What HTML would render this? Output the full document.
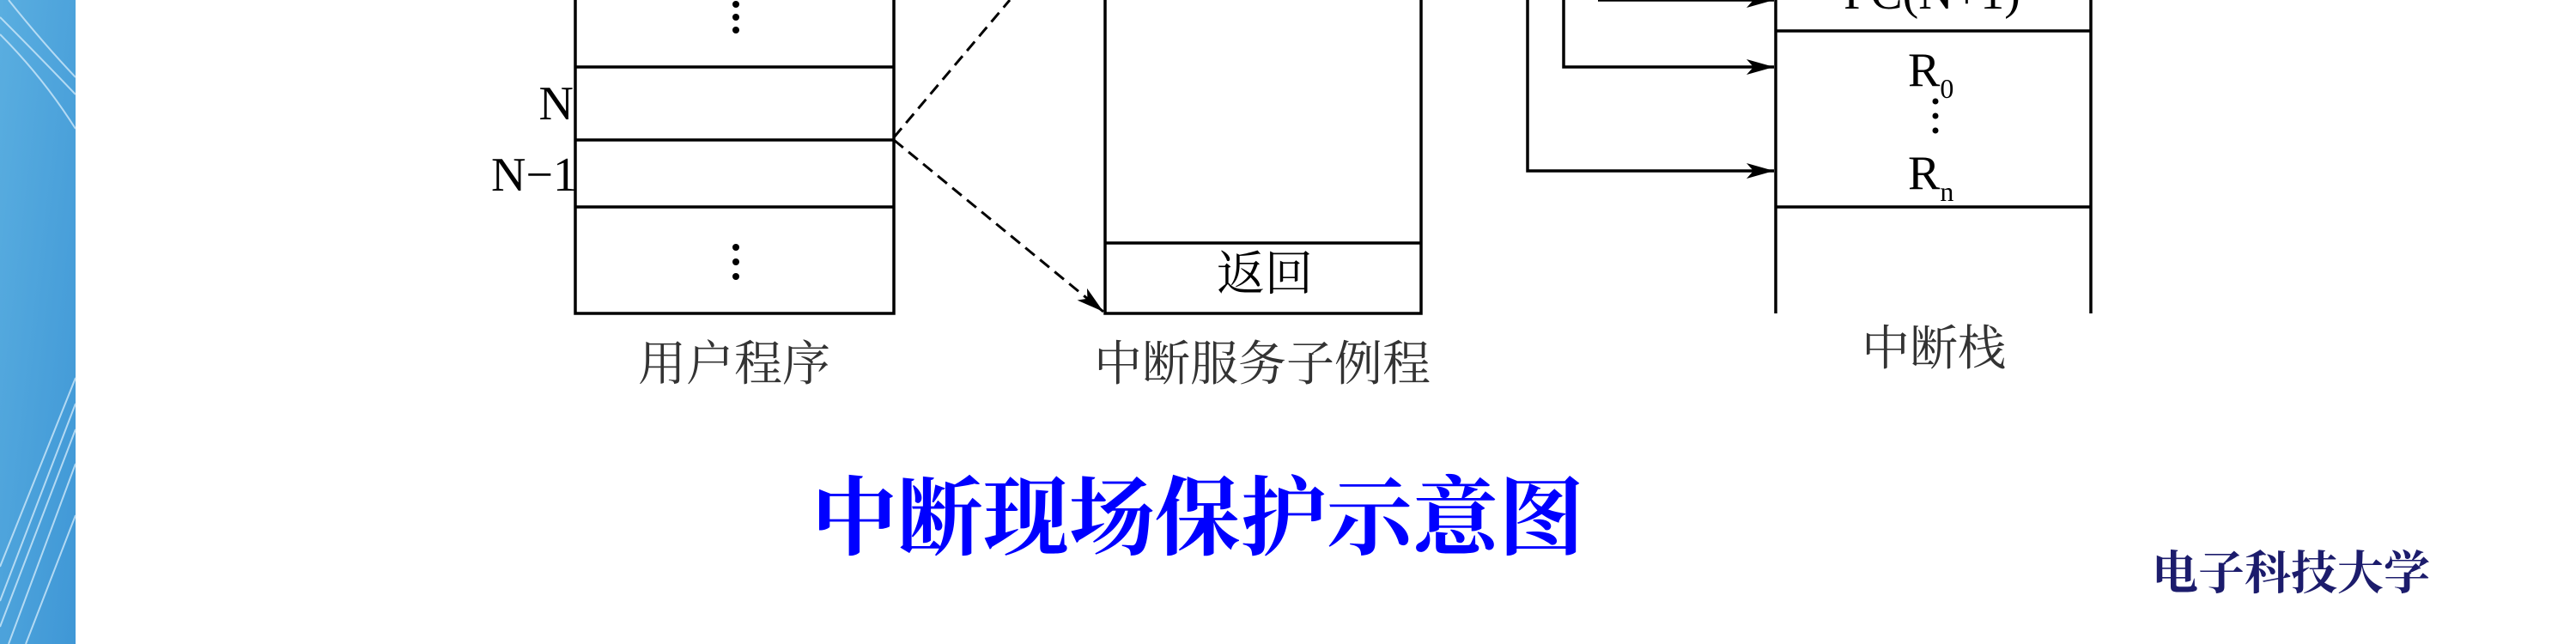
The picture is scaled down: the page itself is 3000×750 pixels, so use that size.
<!DOCTYPE html>
<html><head><meta charset="utf-8"><style>
html,body{margin:0;padding:0;background:#fff;}
body{width:3000px;height:750px;overflow:hidden;position:relative;}
</style></head><body>
<svg width="3000" height="750" viewBox="0 0 3000 750" xmlns="http://www.w3.org/2000/svg" style="position:absolute;left:0;top:0">
<defs>
<linearGradient id="bg" x1="0" y1="0" x2="1" y2="1">
<stop offset="0" stop-color="#5aaee0"/><stop offset="1" stop-color="#3f97d6"/>
</linearGradient>
<marker id="ah" markerWidth="32" markerHeight="18" refX="32" refY="9" orient="auto" markerUnits="userSpaceOnUse" viewBox="0 0 32 18"><path d="M0 0L32 9L0 18L8 9Z" fill="#000"/></marker>
</defs>
<rect x="0" y="0" width="88" height="750" fill="url(#bg)"/>
<g stroke="#cfe9fa" stroke-width="2" fill="none" opacity="0.8">
<path d="M0 20 Q40 60 88 110"/><path d="M0 40 Q50 90 88 150"/><path d="M10 0 Q50 50 88 90"/>
<path d="M0 700 L88 470"/><path d="M0 730 L88 500"/><path d="M10 750 L88 540"/><path d="M30 750 L88 600"/><path d="M0 660 L88 440"/>
</g>
<g stroke="#000" stroke-width="3.5" fill="none">
<path d="M670 0V365H1041V0"/><path d="M670 78H1041M670 163H1041M670 241H1041"/>
<path d="M1287 0V365H1655V0"/><path d="M1287 283H1655"/>
<path d="M2068 0V365M2435 0V365"/><path d="M2068 36H2435M2068 241H2435"/>
<path d="M1861 0H2066" marker-end="url(#ah)"/>
<path d="M1821 0V78H2066" marker-end="url(#ah)"/>
<path d="M1779 0V199H2066" marker-end="url(#ah)"/>
</g>
<g stroke="#000" stroke-width="3" fill="none" stroke-dasharray="14 8">
<path d="M1041 160L1176 0"/>
<path d="M1041 163L1285 363" marker-end="url(#ah)"/>
</g>
<g fill="#000">
<circle cx="857" cy="5" r="4"/><circle cx="857" cy="20" r="4"/><circle cx="857" cy="35" r="4"/>
<circle cx="857" cy="288" r="4"/><circle cx="857" cy="305" r="4"/><circle cx="857" cy="322" r="4"/>
<circle cx="2254" cy="118" r="3.5"/><circle cx="2254" cy="135" r="3.5"/><circle cx="2254" cy="152" r="3.5"/>
</g>
<g font-family="Liberation Serif, serif" fill="#000" font-size="56">
<text x="668" y="139" text-anchor="end">N</text>
<text x="672" y="222" text-anchor="end">N−1</text>
<text x="2222" y="100" font-size="56">R<tspan font-size="32" dy="14">0</tspan></text>
<text x="2222" y="220" font-size="56">R<tspan font-size="32" dy="14">n</tspan></text>
<text x="2250" y="10" font-size="56" text-anchor="middle">PC(N+1)</text>
</g>
<g font-family="Liberation Serif, 'Noto Serif CJK SC', serif" fill="#333" font-size="56" text-anchor="middle">
<text x="1473" y="338" fill="#000">返回</text>
<text x="855" y="443">用户程序</text>
<text x="1470" y="443">中断服务子例程</text>
<text x="2252" y="425">中断栈</text>
</g>
<text x="1395" y="638" text-anchor="middle" font-family="Liberation Serif, 'Noto Serif CJK SC', serif" font-weight="bold" font-size="100" fill="#0000ff">中断现场保护示意图</text>
<text x="2668" y="686" text-anchor="middle" font-family="Liberation Serif, 'Noto Serif CJK SC', serif" font-weight="bold" font-size="54" fill="#1c1c6c">电子科技大学</text>
</svg>
</body></html>
